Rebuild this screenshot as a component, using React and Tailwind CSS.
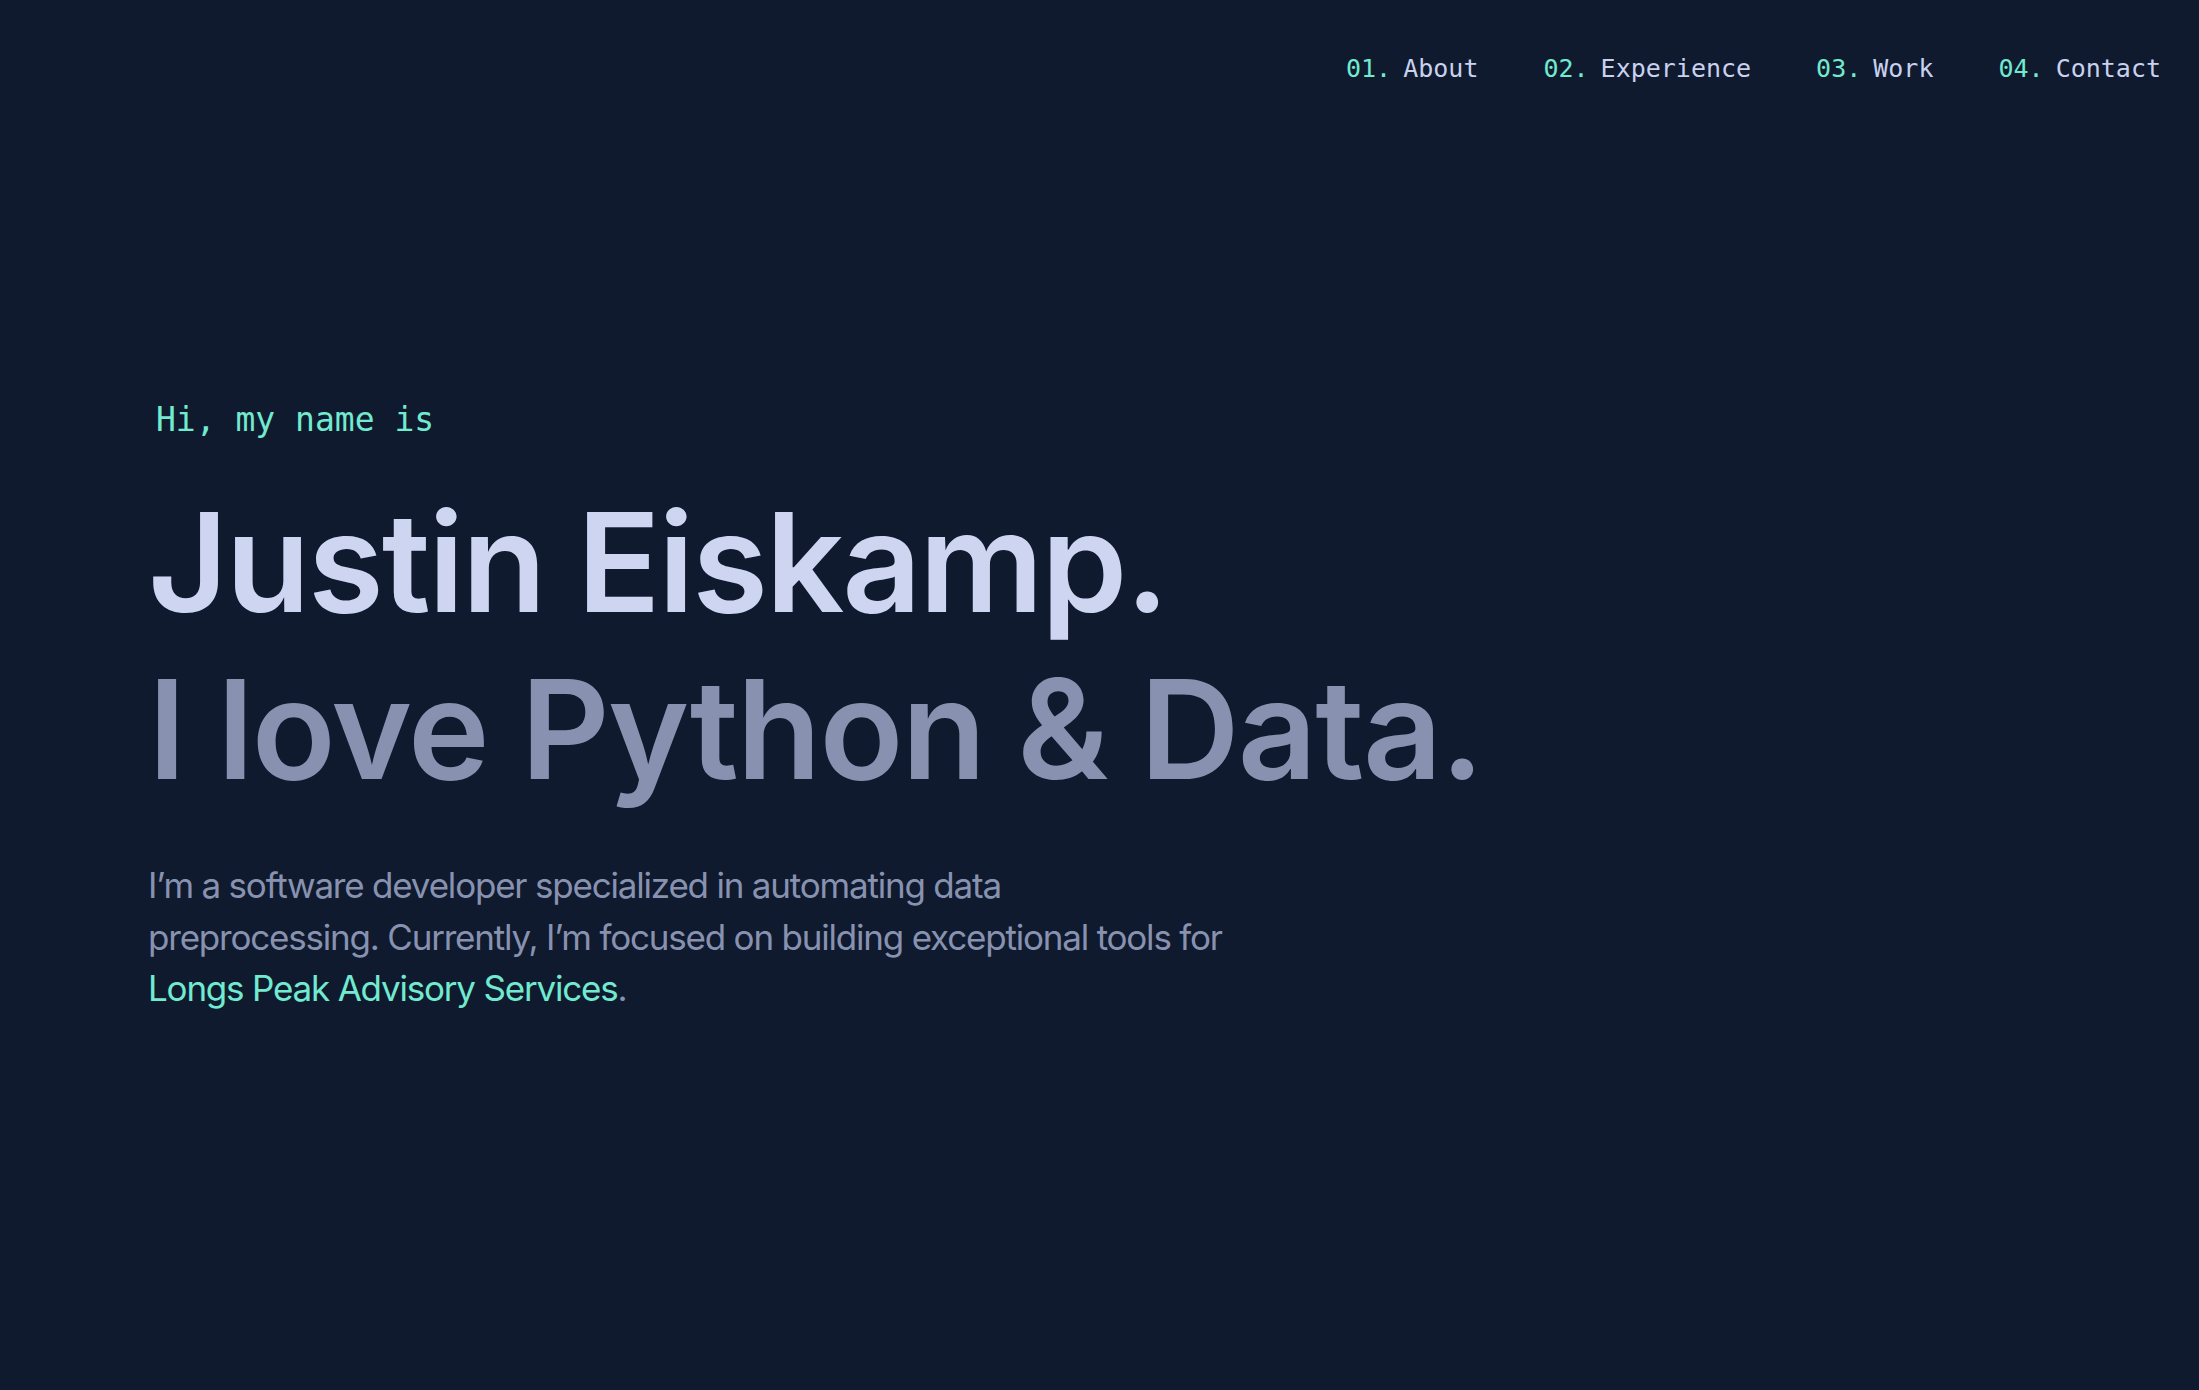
export default function App() {
  const links = [
    { num: "01.", label: "About" },
    { num: "02.", label: "Experience" },
    { num: "03.", label: "Work" },
    { num: "04.", label: "Contact" },
  ]

  return (
    <div className="min-h-screen bg-[#0f1a2e] font-['Inter',sans-serif]">
      <header className="flex justify-end pr-[38px] pt-[56px]">
        <nav className="flex gap-[65px] font-['DejaVu_Sans_Mono',monospace] text-[25px] leading-none">
          {links.map((l) => (
            <a key={l.num} href="#" className="text-[#c9d1ee]">
              <span className="mr-[12px] text-[#72ead0]">{l.num}</span>
              {l.label}
            </a>
          ))}
        </nav>
      </header>

      <main className="pl-[148px] pt-[322px]">
        <p className="ml-[8px] font-['DejaVu_Sans_Mono',monospace] text-[33px] leading-none text-[#72ead0]">
          Hi, my name is
        </p>
        <h1 className="mt-[42px] text-[138px] font-semibold leading-[167px] tracking-[-2.2px] text-[#cdd5f0]">
          Justin Eiskamp.
        </h1>
        <h2 className="text-[138px] font-semibold leading-[167px] tracking-[-1.8px] text-[#8892b0]">
          I love Python &amp; Data.
        </h2>
        <p className="mt-[48px] max-w-[1200px] text-[35px] leading-[51.5px] tracking-[-1.2px] text-[#8892b0]">
          I’m a software developer specialized in automating data
          <br />
          preprocessing. Currently, I’m focused on building exceptional tools for
          <br />
          <a href="#" className="text-[#72ead0]">
            Longs Peak Advisory Services
          </a>
          .
        </p>
      </main>
    </div>
  )
}
